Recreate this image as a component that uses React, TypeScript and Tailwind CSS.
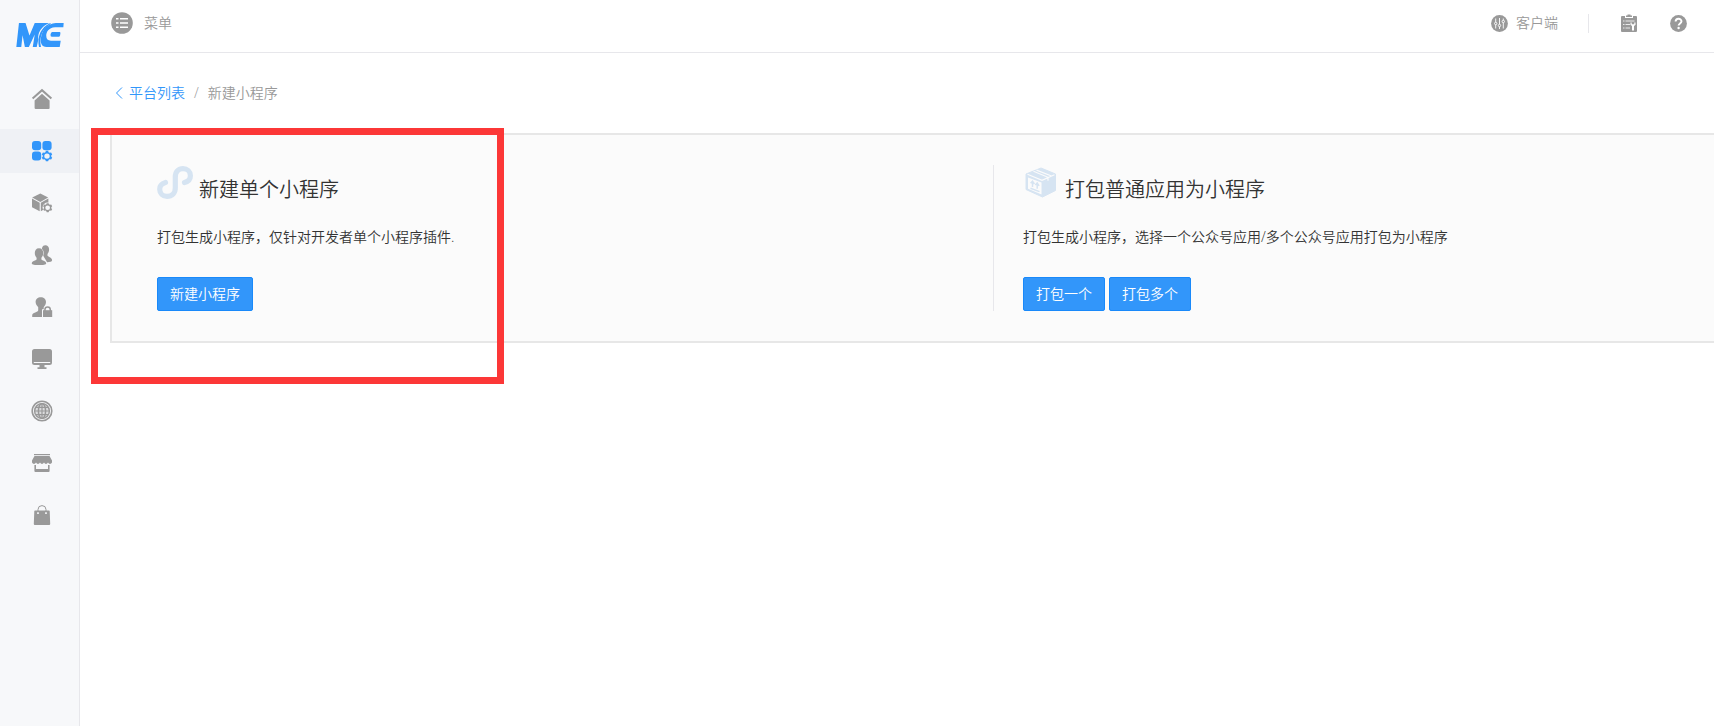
import type { ReactNode } from "react";

type NavItem = {
  label: string;
  icon: ReactNode;
  active?: boolean;
};

// small cog used in the corner of some icons, centred on 15,15
const COG =
  "M13.9 9.8h2.2l.5 1.4 1 .6 1.5-.3 1.1 1.9-1 1.1v1.1l1 1.1-1.1 1.9-1.5-.3-1 .6-.5 1.4h-2.2l-.5-1.4-1-.6-1.5.3-1.1-1.9 1-1.1v-1.1l-1-1.1 1.1-1.9 1.5.3 1-.6zM15 12.4a2.7 2.7 0 1 0 0 5.4 2.7 2.7 0 0 0 0-5.4z";

function NavIcon({ children }: { children: ReactNode }) {
  return (
    <svg
      viewBox="0 0 20 20"
      className="size-5 overflow-visible"
      fill="currentColor"
      aria-hidden="true"
    >
      {children}
    </svg>
  );
}

const navItems: NavItem[] = [
  {
    label: "首页",
    icon: (
      <NavIcon>
        <path
          d="M.6 9.6 10 1.2l9.4 8.4"
          fill="none"
          stroke="currentColor"
          strokeWidth="2"
        />
        <path d="M10 4.8 17.6 11.6V19q0 1-1 1H3.6q-1 0-1-1v-7.4z" />
      </NavIcon>
    ),
  },
  {
    label: "平台",
    active: true,
    icon: (
      <NavIcon>
        <rect x="0" y="0" width="9.2" height="9.2" rx="3" />
        <rect x="10.4" y="0" width="9.2" height="9.2" rx="3" />
        <rect x="0" y="10.4" width="9.2" height="9.2" rx="3" />
        <path d={COG} fillRule="evenodd" />
      </NavIcon>
    ),
  },
  {
    label: "应用",
    icon: (
      <NavIcon>
        <path d="M8.3.6 16.2 4.6 8.3 8.9.2 4.6z" />
        <path d="M0 5.6 7.7 9.8v8.4L0 14.2z" />
        <path d="M8.8 9.8l7.6-4.2v8.4l-7.6 4.2z" />
        <circle cx="15.6" cy="14.6" r="5" fill="#f7f8fa" />
        <path
          d={COG}
          fillRule="evenodd"
          transform="translate(2.6 1.6) scale(.87)"
        />
      </NavIcon>
    ),
  },
  {
    label: "用户",
    icon: (
      <NavIcon>
        <path d="M13.2.2c2.6 0 3.9 1.8 3.9 4.4 0 2-.7 3.2-1.6 4.3v1.6c0 1.2 4.6 1.9 4.6 4.8 0 1.6-2.4 1.9-5 1.9L9.6 8c0-5 .6-7.8 3.6-7.8z" />
        <path
          d="M7 3.2c2.9 0 4.2 2.1 4.2 4.8 0 2.2-.8 3.6-1.8 4.7v1.5c0 1.1 4.8 1.6 4.8 4.2 0 1.2-3.4 1.6-7.2 1.6s-7.2-.4-7.2-1.6c0-2.600 4.800-3.100 4.800-4.200v-1.500c-1-1.100-1.800-2.500-1.800-4.700 0-2.700 1.300-4.800 4.200-4.800z"
          stroke="#f7f8fa"
          strokeWidth="1"
          paintOrder="stroke"
        />
      </NavIcon>
    ),
  },
  {
    label: "权限",
    icon: (
      <NavIcon>
        <path d="M8.8.2c3 0 5.2 2 5.2 4.8 0 2.300-1.200 3.800-2.300 5.200v2.500L11 20H.2v-1.800c0-2.800 6-3 6-5v-3C5 8.800 3.600 7.300 3.600 5c0-2.800 2.200-4.800 5.200-4.800z" />
        <path
          d="M11 13.200h9.200V20H11z"
          stroke="#f7f8fa"
          strokeWidth="2"
          paintOrder="stroke"
        />
        <path
          d="M12.9 14v-1.200a2.7 2.7 0 0 1 5.4 0V14"
          fill="none"
          stroke="currentColor"
          strokeWidth="1.5"
        />
      </NavIcon>
    ),
  },
  {
    label: "站点",
    icon: (
      <NavIcon>
        <path
          d="M2.500 0h15Q20 0 20 2.500v11q0 2.500-2.500 2.500h-15Q0 16 0 13.500v-11Q0 0 2.500 0zM1.800 13v1h16.400v-1z"
          fillRule="evenodd"
        />
        <path d="M7.500 16h5v2.200h2V20h-9v-1.800h2z" />
      </NavIcon>
    ),
  },
  {
    label: "系统",
    icon: (
      <NavIcon>
        <g fill="none" stroke="currentColor">
          <circle cx="10" cy="10" r="9.8" strokeWidth="1.6" />
          <circle cx="10" cy="10" r="7.400" strokeWidth="1.4" />
          <ellipse cx="10" cy="10" rx="3.600" ry="7.400" strokeWidth="1.5" />
          <path d="M10 2.800v14.400M3 10h14M4 6.400h12M4 13.600h12" strokeWidth="1.2" />
        </g>
        <circle cx="10" cy="10" r="8" opacity=".3" />
      </NavIcon>
    ),
  },
  {
    label: "商城",
    icon: (
      <NavIcon>
        <path d="M2 1h16v1.200H2z" />
        <path d="M2.500 3h15L20 7.500v2q-.7 1.400-2 1.400t-2-1.400q-.7 1.400-2 1.400t-2-1.400q-.7 1.400-2 1.400T8 9.500q-.7 1.400-2 1.400T4 9.500q-.7 1.400-2 1.400T0 9.500v-2z" />
        <path d="M2.400 12h1.600v4h12v-4h1.600v6q0 1-1 1H3.400q-1 0-1-1z" />
      </NavIcon>
    ),
  },
  {
    label: "市场",
    icon: (
      <NavIcon>
        <path
          d="M3 5.400h14q.6 0 .7.700L18.200 19q0 1-1 1H2.800q-1 0-1-1L2.300 6.100q.1-.7.7-.7zM6 6.900a1.100 1.100 0 1 0 0 2.200 1.100 1.100 0 0 0 0-2.200zM14 6.900a1.100 1.100 0 1 0 0 2.200 1.100 1.100 0 0 0 0-2.200z"
          fillRule="evenodd"
        />
        <path
          d="M6 7.500V4.600a4 4 0 0 1 8 0v2.900"
          fill="none"
          stroke="currentColor"
          strokeWidth="1"
        />
      </NavIcon>
    ),
  },
];

function Logo() {
  return (
    <svg viewBox="0 0 144 73" className="h-6 w-12" fill="#3296fa" aria-hidden="true">
      <path d="M0 73 8 0h20l12 38L56 0h44C76 10 64 30 67 50l-5 23H50l6-38-18 38H26l-7-36-4 36z" />
      <path d="M106 2C82 14 68 40 75 73h-6C62 42 76 12 102 1z" />
      <path d="M144 0l-1 13h-25C98 14 91 28 91 39c0 10 5 15 14 15h30l-3 19H92C77 73 72 60 75 44 79 20 94 2 120 0z" />
      <path d="M109 27h23q3 0 2 5l-1 6q-1 4-4 4h-21q-5 0-4-7 1-8 5-8z" />
    </svg>
  );
}

function MiniProgramIcon() {
  return (
    <svg viewBox="0 0 36 33" className="h-[33px] w-9" fill="none" aria-hidden="true">
      <path
        d="M8.500 16.500C5 17.500 2.700 20 2.700 23.200c0 4.200 3.200 7.200 7.300 7.200 5 0 8.300-3.200 8.300-8.400V11c0-5.200 3.200-8.300 7.700-8.300 4.200 0 7.400 2.900 7.400 7 0 3.300-2.200 5.800-5.900 6.800"
        stroke="#d6e4f2"
        strokeWidth="5.2"
        strokeLinecap="round"
      />
    </svg>
  );
}

function BoxIcon() {
  return (
    <svg viewBox="0 0 36 33" className="h-[33px] w-9" aria-hidden="true">
      <path
        d="M18 2 32.500 8v16.500L19.500 31 3 23.500V8z"
        fill="#d6e4f2"
        stroke="#d6e4f2"
        strokeLinejoin="round"
      />
      <path
        d="M4.500 8.300 19 14.300 31.500 8.800M10.500 5.300 25 11.300v3.500M13.500 4.100 28.500 10"
        fill="none"
        stroke="#fbfbfb"
        strokeWidth="1.2"
      />
      <path d="M5 11.500 18.500 16.500v12L5 22.800z" fill="#fbfbfb" />
      <path
        d="M9.500 21v-5.500M7.600 17.200l1.900-2 1.900 2.800M14.200 22.800v-5.500M12.300 19l1.900-2 1.900 2.800M7.500 22.200l9 3.400"
        fill="none"
        stroke="#d6e4f2"
        strokeWidth="1.5"
      />
    </svg>
  );
}

function MenuIcon() {
  return (
    <svg viewBox="0 0 22 22" className="size-[22px]" aria-hidden="true">
      <circle cx="11" cy="11" r="10.8" fill="#999" />
      <path
        d="M5 6.800h2.500M9 6.800h8M5 11h2.500M9 11h8M5 15.200h2.500M9 15.200h8"
        stroke="#fff"
        strokeWidth="1.6"
      />
    </svg>
  );
}

function ClientIcon() {
  return (
    <svg viewBox="0 0 17 17" className="size-[17px]" aria-hidden="true">
      <circle cx="8.5" cy="8.5" r="8.4" fill="#999" />
      <g fill="#999" stroke="#fff" strokeWidth=".9">
        <path d="M4.700 3.500v10M8.500 3v11M12.300 3.500v10" />
        <circle cx="4.7" cy="8.5" r="1.2" />
        <circle cx="8.5" cy="10.5" r="1.2" />
        <circle cx="12.3" cy="6.5" r="1.2" />
      </g>
    </svg>
  );
}

function ClipboardIcon() {
  return (
    <svg viewBox="0 0 16 18" className="h-[18px] w-4" aria-hidden="true">
      <path d="M1 2h3v2h8V2h3q1 0 1 1v14q0 1-1 1H1q-1 0-1-1V3q0-1 1-1z" fill="#999" />
      <path d="M5 1.500h1.500V.5h3v1H11V3H5z" fill="#999" />
      <path
        d="M2 7h1.500M4.500 7H13.500M2 10.500h1.500M4.500 10.500H9M2 14h1.500M4.500 14H9"
        stroke="#fff"
        strokeWidth="1"
        opacity=".8"
      />
      <path d="M9.500 8.500v2.200l1.500 1.300v4.500h2V12l1.500-1.300V8.500h-1.200v1.700h-2.600V8.500z" fill="#fff" />
    </svg>
  );
}

function HelpIcon() {
  return (
    <svg viewBox="0 0 17 17" className="size-[17px]" aria-hidden="true">
      <circle cx="8.5" cy="8.5" r="8.4" fill="#999" />
      <path
        d="M5.600 6.600c0-3.800 5.900-3.700 5.900-.3 0 2-2.900 2.200-2.900 4.200"
        fill="none"
        stroke="#fff"
        strokeWidth="1.9"
      />
      <circle cx="8.6" cy="13" r="1.2" fill="#fff" />
    </svg>
  );
}

function PrimaryButton({ children }: { children: ReactNode }) {
  return (
    <button
      type="button"
      className="h-[34px] rounded-xs border border-[#1989fa] bg-[#3296fa] px-3 text-sm text-white"
    >
      {children}
    </button>
  );
}

type CreateOptionProps = {
  icon: ReactNode;
  title: string;
  description: string;
  actions: string[];
};

function CreateOption({ icon, title, description, actions }: CreateOptionProps) {
  return (
    <div>
      <div className="flex h-10 gap-1.5 pt-px">
        {icon}
        <h2 className="text-xl leading-12">{title}</h2>
      </div>
      <p className="mt-[22px] text-sm">{description}</p>
      <div className="mt-[30px] flex gap-1">
        {actions.map((action) => (
          <PrimaryButton key={action}>{action}</PrimaryButton>
        ))}
      </div>
    </div>
  );
}

export default function App() {
  return (
    <div className="flex min-h-screen bg-white font-['Open_Sans','Noto_Sans_CJK_SC',sans-serif] text-sm font-[350] text-[#333]">
      {/* SIDEBAR */}
      <aside className="w-20 shrink-0 border-r border-[#e7e7eb] bg-[#f7f8fa]">
        <a href="#" aria-label="首页" className="block px-4 pt-[23px] pb-[30px]">
          <Logo />
        </a>
        <nav className="flex flex-col gap-2">
          {navItems.map((item) => (
            <a
              key={item.label}
              href="#"
              aria-label={item.label}
              className={
                item.active
                  ? "flex h-11 items-center bg-[#eff1f5] pl-8 text-[#3296fa]"
                  : "flex h-11 items-center pl-8 text-[#999]"
              }
            >
              {item.icon}
            </a>
          ))}
        </nav>
      </aside>

      <div className="min-w-0 flex-1 overflow-hidden">
        {/* HEADER */}
        <header className="flex h-[53px] items-center justify-between border-b border-[#e7e7eb] pr-[27px] pb-1.5 pl-[31px] text-[#999]">
          <button type="button" className="flex items-center gap-[11px]">
            <MenuIcon />
            菜单
          </button>
          <div className="flex items-center">
            <a href="#" className="flex items-center gap-2">
              <ClientIcon />
              客户端
            </a>
            <span className="mr-8 ml-[30px] h-[19px] border-l border-[#e7e7eb]" />
            <a href="#" aria-label="工单" className="mr-[33px]">
              <ClipboardIcon />
            </a>
            <a href="#" aria-label="帮助">
              <HelpIcon />
            </a>
          </div>
        </header>

        <main className="pl-[30px]">
          {/* BREADCRUMB */}
          <div className="flex h-20 items-center gap-[9px] pl-[5px]">
            <a href="#" className="flex items-center gap-1.5 text-[#3296fa]">
              <svg viewBox="0 0 8 12" className="h-3 w-2" fill="none" aria-hidden="true">
                <path d="M7 .5 1.500 6 7 11.500" stroke="currentColor" />
              </svg>
              平台列表
            </a>
            <span className="text-[#999]">/</span>
            <span className="text-[#999]">新建小程序</span>
          </div>

          {/* PANEL */}
          <section className="relative grid grid-cols-[11fr_9fr] border-2 border-r-0 border-[#e7e7e7] bg-[#fbfbfb] py-[30px]">
            <div className="pl-[45px]">
              <CreateOption
                icon={<MiniProgramIcon />}
                title="新建单个小程序"
                description="打包生成小程序，仅针对开发者单个小程序插件."
                actions={["新建小程序"]}
              />
            </div>
            <div className="border-l border-[#e7e7eb] pl-[29px]">
              <CreateOption
                icon={<BoxIcon />}
                title="打包普通应用为小程序"
                description="打包生成小程序，选择一个公众号应用/多个公众号应用打包为小程序"
                actions={["打包一个", "打包多个"]}
              />
            </div>

            {/* highlight around the first option */}
            <div className="pointer-events-none absolute -top-[7px] -left-[21px] h-64 w-[413px] border-7 border-[#fc3737]" />
          </section>
        </main>
      </div>
    </div>
  );
}
